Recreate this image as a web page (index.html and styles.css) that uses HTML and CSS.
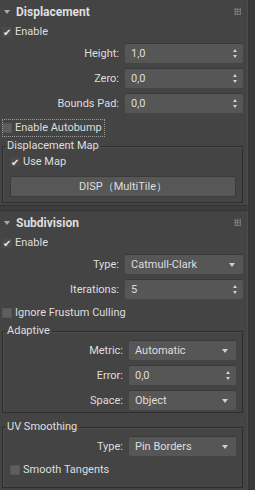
FILE: index.html
```html
<!DOCTYPE html>
<html lang="en">
<head>
    <meta charset="UTF-8">
    <title>Displacement</title>
    <link rel="stylesheet" href="styles.css">
</head>
<body>
    <div class="panel">
        <div class="rollouts">
            <div class="rollout">
                <div class="header">
                    <span class="arrow"></span>
                    <span class="title">Displacement</span>
                    <span class="grip"></span>
                </div>
                <div class="content">
                    <label class="check on first">Enable</label>
                    <div class="field-row"><span class="label">Height:</span><div class="spinner">1,0</div></div>
                    <div class="field-row"><span class="label">Zero:</span><div class="spinner">0,0</div></div>
                    <div class="field-row"><span class="label">Bounds Pad:</span><div class="spinner">0,0</div></div>
                    <label class="check focus spaced">Enable Autobump</label>
                    <fieldset class="group">
                        <legend>Displacement Map</legend>
                        <label class="check on">Use Map</label>
                        <button class="map-btn">DISP（MultiTile）</button>
                    </fieldset>
                </div>
            </div>
            <div class="rollout">
                <div class="header">
                    <span class="arrow"></span>
                    <span class="title">Subdivision</span>
                    <span class="grip"></span>
                </div>
                <div class="content">
                    <label class="check on first">Enable</label>
                    <div class="field-row"><span class="label">Type:</span><div class="dropdown">Catmull-Clark</div></div>
                    <div class="field-row"><span class="label">Iterations:</span><div class="spinner">5</div></div>
                    <label class="check">Ignore Frustum Culling</label>
                    <fieldset class="group">
                        <legend>Adaptive</legend>
                        <div class="field-row"><span class="label">Metric:</span><div class="dropdown">Automatic</div></div>
                        <div class="field-row"><span class="label">Error:</span><div class="spinner">0,0</div></div>
                        <div class="field-row"><span class="label">Space:</span><div class="dropdown">Object</div></div>
                    </fieldset>
                    <fieldset class="group">
                        <legend>UV Smoothing</legend>
                        <div class="field-row"><span class="label">Type:</span><div class="dropdown">Pin Borders</div></div>
                        <label class="check">Smooth Tangents</label>
                    </fieldset>
                </div>
            </div>
        </div>
        <div class="scrollbar"></div>
    </div>
</body>
</html>
```

FILE: styles.css
```css
body,
html {
    margin: 0;
    height: 100%;
    background-color: #3d3d3d;
    font-family: Roboto, 'Noto Sans', sans-serif;
    font-size: 11px;
    color: #dedede;
    overflow: hidden;
}

.panel {
    display: flex;
    height: 100%;
}

.rollouts {
    width: 248px;
    display: flex;
    flex-direction: column;
    gap: 4px;
}

.scrollbar {
    flex: 1;
    background: #393939;
    border-left: 1px solid #333;
}

.rollout {
    background: #444;
    border: 1px solid #333;
    border-left: 0;
    border-right-color: #4c4c4c;
}

.rollout:first-child {
    border-top: 0;
}

.header {
    display: flex;
    align-items: center;
    height: 22px;
    padding: 1px 0 0 4px;
    box-sizing: border-box;
}

.arrow {
    width: 0;
    height: 0;
    border-left: 3px solid transparent;
    border-right: 3px solid transparent;
    border-top: 4px solid #aaa;
}

.title {
    font-weight: bold;
    font-size: 12px;
    margin-left: 6px;
    flex: 1;
}

.grip {
    width: 7px;
    height: 7px;
    margin-right: 6px;
    background-image: radial-gradient(circle, #8a8a8a 0.8px, transparent 1px);
    background-size: 2.5px 2.5px;
}

.content {
    display: flex;
    flex-direction: column;
    gap: 5px;
    padding: 0 4px 2px 2px;
}

/* checkboxes */
.check {
    display: flex;
    align-items: center;
    height: 18px;
    line-height: 18px;
    align-self: flex-start;
}

.check::before {
    content: '';
    width: 10px;
    height: 10px;
    margin-right: 3px;
    background: #5e5e5e;
    box-sizing: border-box;
    border: 1px solid #555;
}

.check.on::before {
    content: '\2714';
    color: #e8e8e8;
    font-size: 10px;
    line-height: 9px;
    text-align: center;
    background: #4a4a4a;
    border-color: #4a4a4a;
}

.check.first {
    margin-top: 1px;
    margin-bottom: -3px;
}

.check.spaced {
    margin-top: 1px;
}

.check.focus {
    outline: 1px dotted #9a9a9a;
    outline-offset: -1px;
    padding-right: 3px;
}

/* label + field rows */
.field-row {
    display: flex;
    align-items: center;
    height: 20px;
}

.label {
    width: 117px;
    text-align: right;
    margin-right: 6px;
}

.group .label {
    width: 113px;
}

.spinner,
.dropdown {
    flex: 1;
    height: 20px;
    line-height: 20px;
    box-sizing: border-box;
    padding-left: 6px;
    background: #565656;
    border-top: 1px solid #3a3a3a;
    border-radius: 2px;
    position: relative;
}

.spinner::after {
    content: '';
    position: absolute;
    right: 6px;
    top: 5px;
    width: 0;
    height: 0;
    border-left: 2px solid transparent;
    border-right: 2px solid transparent;
    border-bottom: 3px solid #d0d0d0;
}

.spinner::before {
    content: '';
    position: absolute;
    right: 6px;
    top: 11px;
    width: 0;
    height: 0;
    border-left: 2px solid transparent;
    border-right: 2px solid transparent;
    border-top: 3px solid #d0d0d0;
}

.dropdown::after {
    content: '';
    position: absolute;
    right: 8px;
    top: 8px;
    width: 0;
    height: 0;
    border-left: 3px solid transparent;
    border-right: 3px solid transparent;
    border-top: 4px solid #d0d0d0;
}

/* group boxes */
.group {
    margin: -3px 0 0 0;
    padding: 0 6px 2px 7px;
    border: 1px solid #2e2e2e;
    box-shadow: inset 1px 1px 0 #4e4e4e;
    display: flex;
    flex-direction: column;
    gap: 5px;
}

.group + .group {
    margin-top: 2px;
    padding-bottom: 8px;
}

.group legend {
    padding: 0 2px 0 1px;
    margin-left: -4px;
    line-height: 14px;
}

.group .field-row:first-of-type {
    margin-top: 2px;
}

.map-btn {
    height: 21px;
    margin: 0 0 3px 0;
    background: #575757;
    border: 1px solid #3b3b3b;
    border-radius: 2px;
    color: #dedede;
    font-family: inherit;
    font-size: 11px;
    padding: 0;
}
```
